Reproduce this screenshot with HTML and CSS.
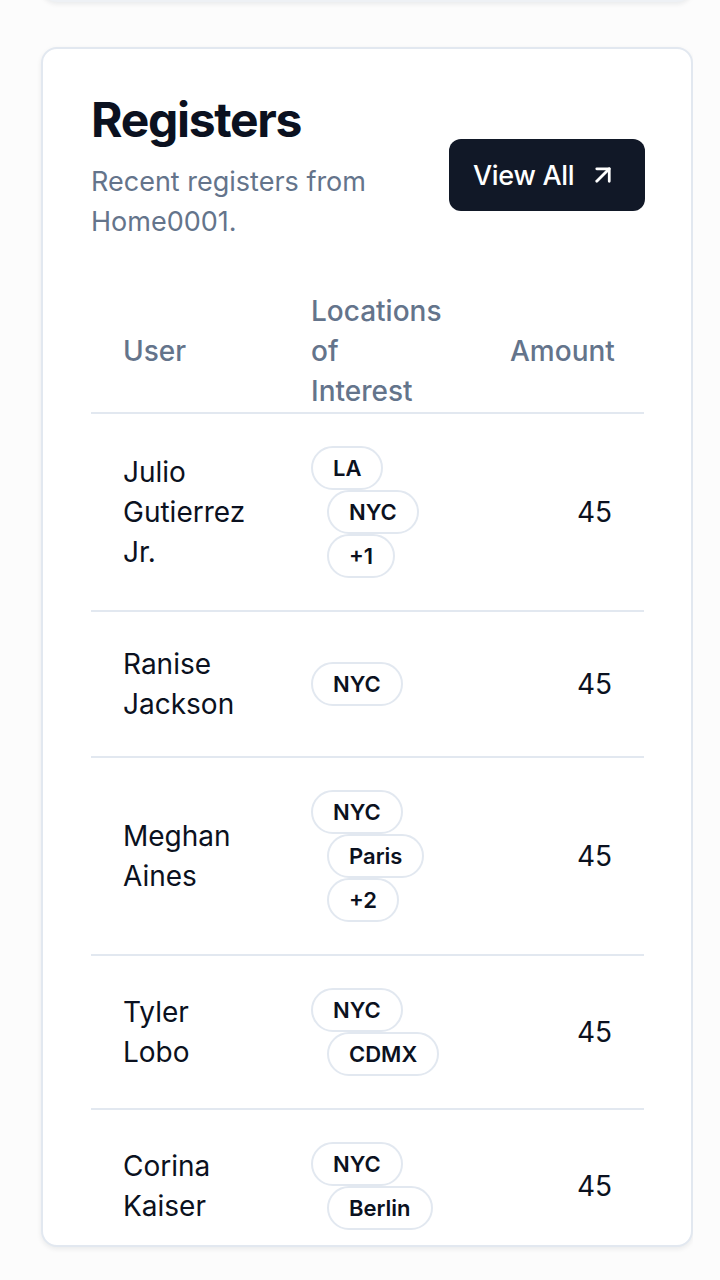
FILE: index.html
```html
<!DOCTYPE html>
<html lang="en">
<head>
<meta charset="utf-8">
<title>Registers</title>
<link rel="stylesheet" href="styles.css">
</head>
<body>
<div class="page">
  <div class="card card-prev"></div>
  <section class="card registers">
    <header class="card-header">
      <div class="head-text">
        <h2 class="card-title">Registers</h2>
        <p class="card-desc">Recent registers from Home0001.</p>
      </div>
      <a class="btn" href="#">View All
        <svg class="btn-icon" viewBox="0 0 24 24" fill="none" stroke="currentColor" stroke-width="2" stroke-linecap="round" stroke-linejoin="round"><path d="M7 7h10v10"/><path d="M7 17 17 7"/></svg>
      </a>
    </header>
    <div class="card-content">
      <table class="reg-table">
        <colgroup><col class="c-user"><col class="c-loc"><col class="c-amt"></colgroup>
        <thead>
          <tr><th>User</th><th><span class="th-wrap">Locations of Interest</span></th><th class="num">Amount</th></tr>
        </thead>
        <tbody>
          <tr>
            <td>Julio Gutierrez Jr.</td>
            <td><div class="badges"><span class="badge">LA</span><span class="badge">NYC</span><span class="badge">+1</span></div></td>
            <td class="num">45</td>
          </tr>
          <tr>
            <td>Ranise Jackson</td>
            <td><div class="badges"><span class="badge">NYC</span></div></td>
            <td class="num">45</td>
          </tr>
          <tr>
            <td>Meghan Aines</td>
            <td><div class="badges"><span class="badge">NYC</span><span class="badge">Paris</span><span class="badge">+2</span></div></td>
            <td class="num">45</td>
          </tr>
          <tr>
            <td>Tyler Lobo</td>
            <td><div class="badges"><span class="badge">NYC</span><span class="badge">CDMX</span></div></td>
            <td class="num">45</td>
          </tr>
          <tr>
            <td>Corina Kaiser</td>
            <td><div class="badges"><span class="badge">NYC</span><span class="badge">Berlin</span></div></td>
            <td class="num">45</td>
          </tr>
        </tbody>
      </table>
    </div>
  </section>
</div>
</body>
</html>
```

FILE: styles.css
```css
* { box-sizing: border-box; }

html, body {
  margin: 0;
  padding: 0;
  background: #fcfcfc;
  font-family: Inter, "Noto Sans", "Liberation Sans", sans-serif;
  color: #0f172a;
}

.page {
  display: flex;
  flex-direction: column;
  gap: 45px;
  padding-left: 41px;
  width: 693px;
  height: 1280px;
  overflow: hidden;
}

.card {
  background: #fff;
  border: 2px solid #e2e8f0;
  border-radius: 16px;
  box-shadow: 0 2px 5px rgba(15, 23, 42, 0.08);
}

.card-prev {
  flex: none;
  height: 200px;
  margin-top: -198px;
  border-color: #eef1f5;
}

.registers {
  flex: none;
  height: 1200px;
  overflow: hidden;
}

.card-header {
  display: flex;
  align-items: center;
  justify-content: space-between;
  gap: 24px;
  padding: 47px 46px 48px 48px;
}

.head-text {
  flex: 1;
  min-width: 0;
}

.card-title {
  margin: 0;
  font-size: 48px;
  line-height: 48px;
  font-weight: 700;
  letter-spacing: -1.3px;
  color: #0b1120;
}

.card-desc {
  margin: 18px 0 0;
  font-size: 27px;
  line-height: 40px;
  color: #64748b;
  max-width: 300px;
}

.btn {
  flex: none;
  display: inline-flex;
  align-items: center;
  gap: 14px;
  height: 72px;
  width: 196px;
  padding: 0 24px;
  margin-top: 12px;
  border-radius: 12px;
  background: #111827;
  color: #fff;
  font-size: 27px;
  font-weight: 500;
  text-decoration: none;
  letter-spacing: -0.3px;
}

.btn-icon {
  width: 30px;
  height: 30px;
  stroke-width: 2.2;
}

.card-content {
  padding: 0 46px 0 48px;
}

.reg-table {
  width: 553px;
  border-collapse: collapse;
  table-layout: fixed;
  font-size: 28px;
  line-height: 40px;
}

.c-user { width: 188px; }
.c-loc { width: 199px; }
.c-amt { width: 166px; }

.reg-table th {
  padding: 1px 32px;
  text-align: left;
  vertical-align: middle;
  font-weight: 500;
  color: #64748b;
  border-bottom: 2px solid #e2e8f0;
}

.reg-table th.num { padding-right: 34px; }

.th-wrap {
  display: block;
  max-width: 130px;
}

.reg-table td {
  padding: 32px;
  vertical-align: middle;
  border-bottom: 2px solid #e2e8f0;
  color: #0b1120;
}

.reg-table td:nth-child(2) { padding-right: 0; }

.reg-table .num { text-align: right; }

.badges {
  display: flex;
  flex-wrap: wrap;
  align-items: flex-start;
}

.badge {
  display: inline-flex;
  align-items: center;
  height: 44px;
  padding: 0 20px;
  border: 2px solid #e2e8f0;
  border-radius: 999px;
  font-size: 22px;
  font-weight: 600;
  line-height: 32px;
  color: #0b1120;
}

.badge + .badge { margin-left: 16px; }
```
